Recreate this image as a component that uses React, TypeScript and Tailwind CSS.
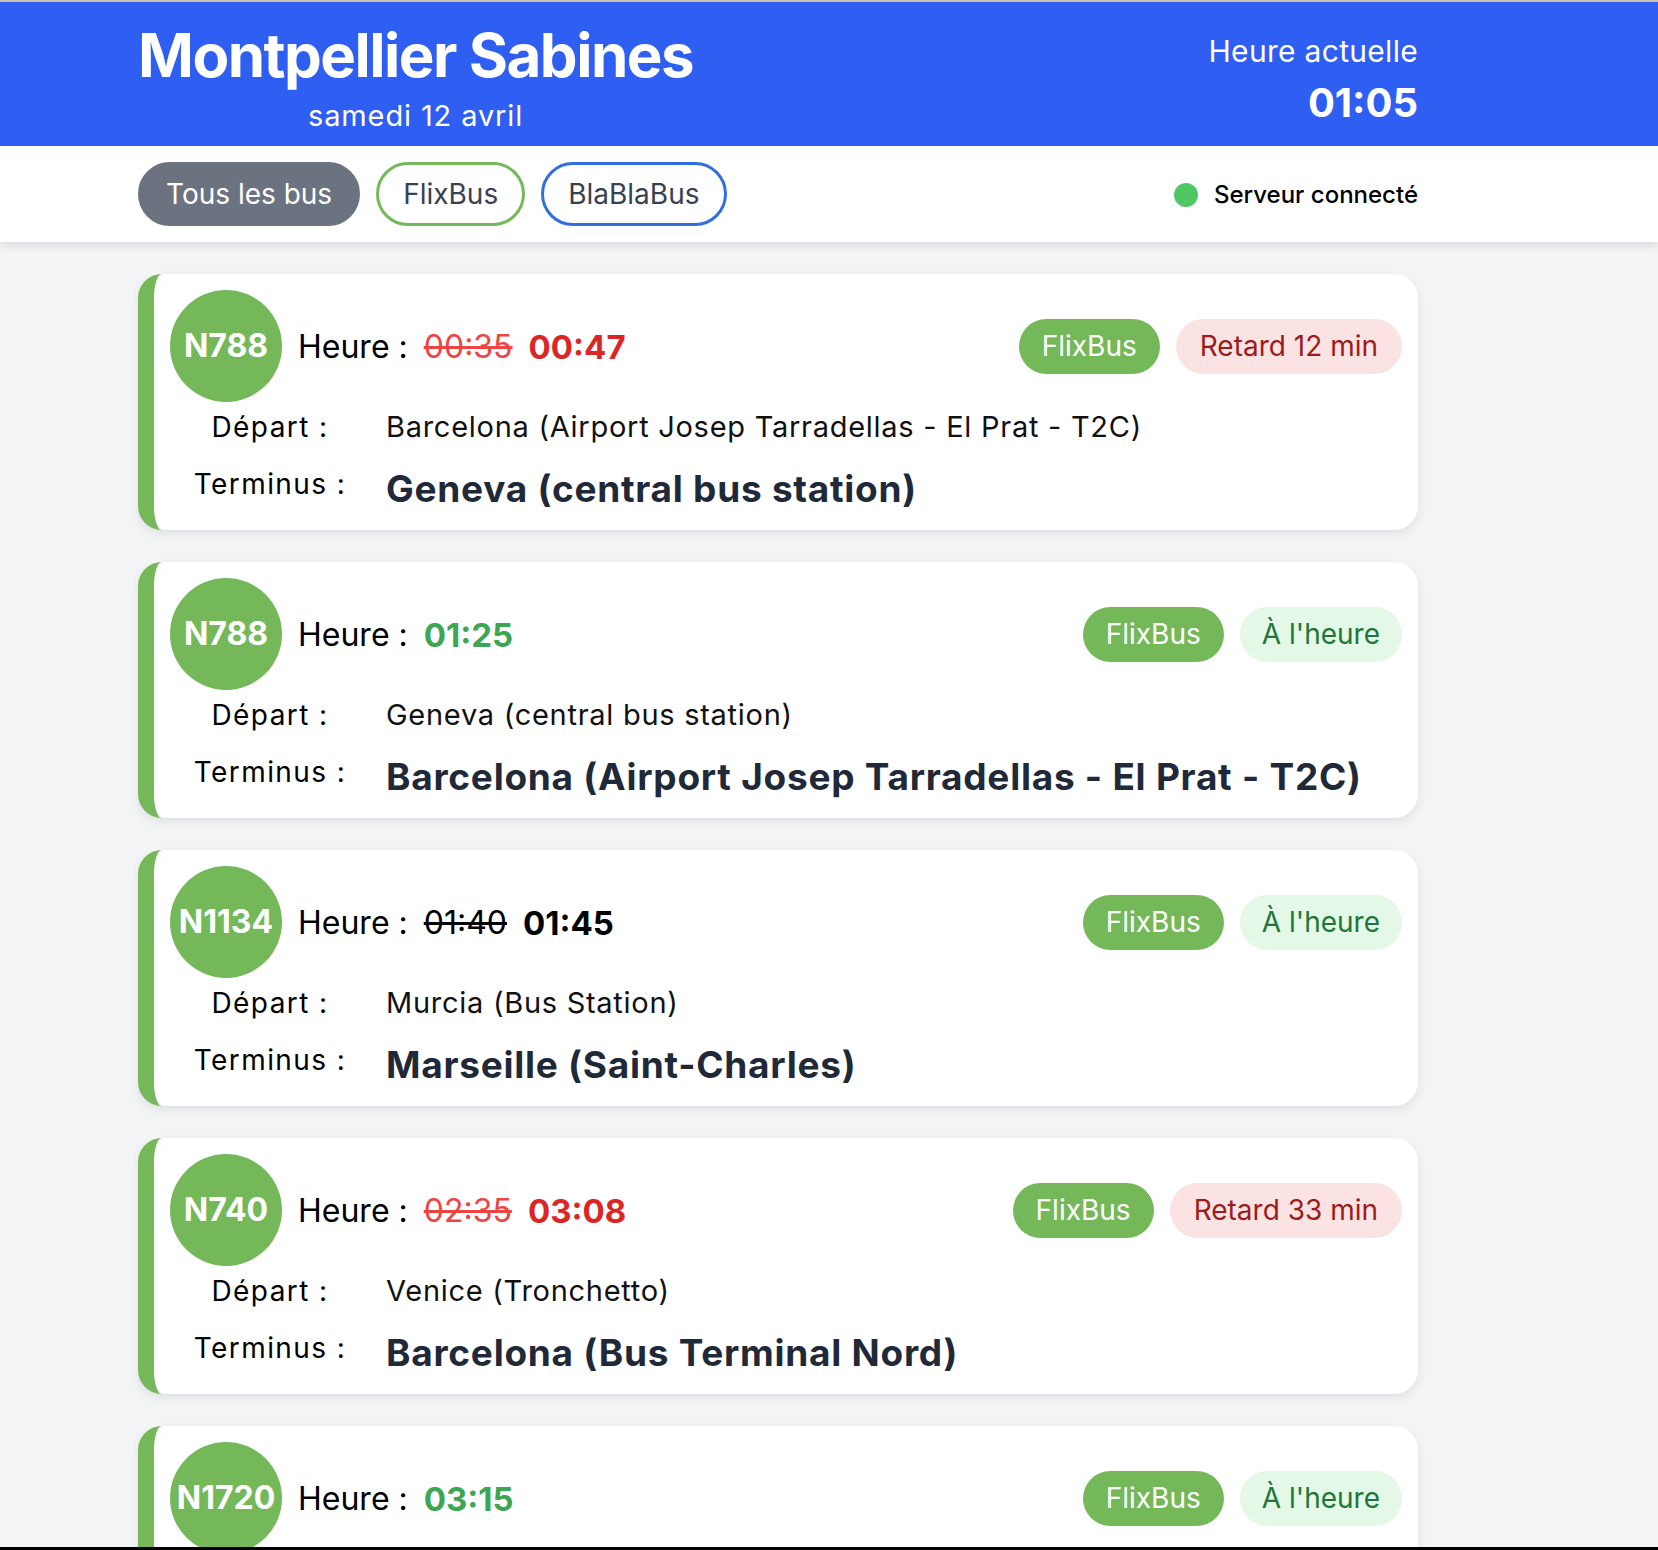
import React from "react";

type Bus = {
  line: string;
  planned?: string;
  actual: string;
  timeKind: "late" | "ontime" | "neutral";
  status: "late" | "ontime";
  statusText: string;
  depart: string;
  terminus: string;
};

const buses: Bus[] = [
  {
    line: "N788",
    planned: "00:35",
    actual: "00:47",
    timeKind: "late",
    status: "late",
    statusText: "Retard 12 min",
    depart: "Barcelona (Airport Josep Tarradellas - El Prat - T2C)",
    terminus: "Geneva (central bus station)",
  },
  {
    line: "N788",
    actual: "01:25",
    timeKind: "ontime",
    status: "ontime",
    statusText: "À l'heure",
    depart: "Geneva (central bus station)",
    terminus: "Barcelona (Airport Josep Tarradellas - El Prat - T2C)",
  },
  {
    line: "N1134",
    planned: "01:40",
    actual: "01:45",
    timeKind: "neutral",
    status: "ontime",
    statusText: "À l'heure",
    depart: "Murcia (Bus Station)",
    terminus: "Marseille (Saint-Charles)",
  },
  {
    line: "N740",
    planned: "02:35",
    actual: "03:08",
    timeKind: "late",
    status: "late",
    statusText: "Retard 33 min",
    depart: "Venice (Tronchetto)",
    terminus: "Barcelona (Bus Terminal Nord)",
  },
  {
    line: "N1720",
    actual: "03:15",
    timeKind: "ontime",
    status: "ontime",
    statusText: "À l'heure",
    depart: "Lyon (Perrache)",
    terminus: "Barcelona (Bus Terminal Nord)",
  },
];

function TimeBlock({ bus }: { bus: Bus }) {
  const strikeCls = bus.timeKind === "late" ? "text-[#ef4444]" : "text-black";
  const actualCls =
    bus.timeKind === "late"
      ? "text-[#dc2626]"
      : bus.timeKind === "ontime"
      ? "text-[#3ca653]"
      : "text-black";
  return (
    <div className="flex items-center gap-4 mt-[2px]">
      <span className="text-[32px] leading-[40px] text-black">Heure :</span>
      {bus.planned && (
        <span className={`text-[32px] leading-[40px] line-through ${strikeCls}`}>{bus.planned}</span>
      )}
      <span className={`text-[33px] leading-[40px] font-bold ${actualCls}`}>{bus.actual}</span>
    </div>
  );
}

function Card({ bus }: { bus: Bus }) {
  return (
    <div className="bg-white rounded-3xl border-l-[16px] border-[#74b85a] shadow-[0_4px_10px_rgba(0,0,0,0.08)] pt-4 pr-4 pl-4 pb-[19px]">
      <div className="flex items-center justify-between h-[112px]">
        <div className="flex items-center gap-4">
          <div className="w-[112px] h-[112px] rounded-full bg-[#74b85a] flex items-center justify-center text-white font-bold text-[32px] leading-none shrink-0">
            {bus.line}
          </div>
          <TimeBlock bus={bus} />
        </div>
        <div className="flex items-center gap-4">
          <span className="h-[55px] px-[23px] rounded-full bg-[#74b85a] text-white text-[28px] flex items-center">
            FlixBus
          </span>
          {bus.status === "late" ? (
            <span className="h-[55px] px-[24px] rounded-full bg-[#fbe3e3] text-[#9b1c1c] text-[28px] flex items-center">
              {bus.statusText}
            </span>
          ) : (
            <span className="h-[55px] px-[22px] rounded-full bg-[#e3f8e7] text-[#22753a] text-[28px] flex items-center">
              {bus.statusText}
            </span>
          )}
        </div>
      </div>
      <div className="flex items-start mt-[7px]">
        <div className="w-[200px] text-center text-[28px] leading-[36px] tracking-[0.05em] text-black shrink-0">
          Départ :
        </div>
        <div className="ml-4 text-[29px] leading-[36px] tracking-[0.025em] text-[#111111]">{bus.depart}</div>
      </div>
      <div className="flex items-start mt-[18px] h-[48px]">
        <div className="w-[200px] mt-[3px] text-center text-[28px] leading-[36px] tracking-[0.05em] text-black shrink-0">
          Terminus :
        </div>
        <div className="ml-4 mt-[4px] text-[37px] leading-[44px] tracking-[0.02em] font-bold text-[#1f2937]">
          {bus.terminus}
        </div>
      </div>
    </div>
  );
}

export default function App() {
  return (
    <div className="h-[1550px] overflow-hidden bg-[#f3f4f6] border-t-2 border-b-[3px] border-t-[#cdbfae] border-b-black font-['Inter',sans-serif]">
      <header className="bg-[#2f5ef2] h-[144px] text-white">
        <div className="ml-[138px] w-[1280px] flex justify-between items-start pt-[17px]">
          <div className="text-center">
            <h1 className="text-[60px] leading-[72px] font-bold tracking-tight">Montpellier Sabines</h1>
            <div className="mt-[7px] text-[29px] leading-[36px] tracking-[0.03em]">samedi 12 avril</div>
          </div>
          <div className="text-right mt-[14px]">
            <div className="text-[30px] leading-[36px] tracking-[0.01em]">Heure actuelle</div>
            <div className="mt-[10px] text-[40px] leading-[48px] font-bold">01:05</div>
          </div>
        </div>
      </header>
      <div className="bg-white shadow-[0_4px_8px_rgba(0,0,0,0.1)] relative">
        <div className="ml-[138px] w-[1280px] flex justify-between items-center py-4">
          <div className="flex items-center gap-4">
            <button className="h-[64px] px-[25px] rounded-full border-[3px] border-[#6b7280] bg-[#6b7280] text-white text-[28px]">
              Tous les bus
            </button>
            <button className="h-[64px] px-[24px] rounded-full border-[3px] border-[#74b85a] bg-white text-[#374151] text-[28px]">
              FlixBus
            </button>
            <button className="h-[64px] px-[24px] rounded-full border-[3px] border-[#2f6fe0] bg-white text-[#374151] text-[28px]">
              BlaBlaBus
            </button>
          </div>
          <div className="flex items-center gap-4 mt-[2px]">
            <span className="w-6 h-6 rounded-full bg-[#4fc764]" />
            <span className="text-2xl font-medium text-black">Serveur connecté</span>
          </div>
        </div>
      </div>
      <main className="ml-[138px] w-[1280px] pt-8 flex flex-col gap-8">
        {buses.map((b, i) => (
          <Card key={i} bus={b} />
        ))}
      </main>
    </div>
  );
}
